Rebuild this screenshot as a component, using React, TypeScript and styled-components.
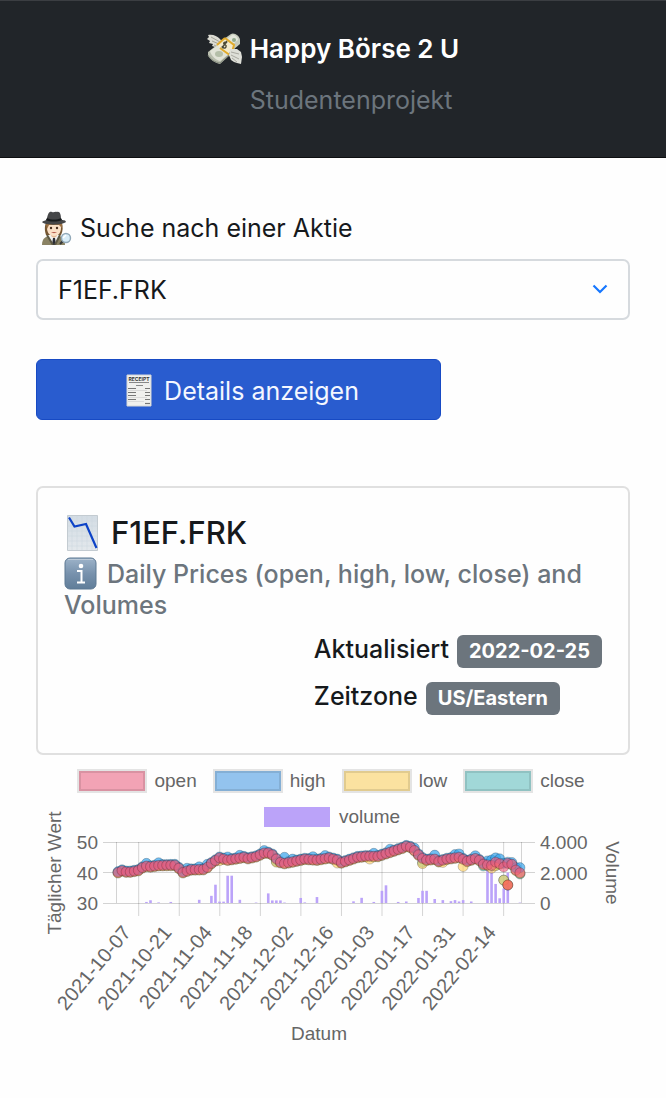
import React from "react";
import styled, { createGlobalStyle } from "styled-components";

const GlobalStyle = createGlobalStyle`
  * { box-sizing: border-box; }
  body {
    margin: 0;
    background: #fefefe;
    color: #16191c;
    font-family: Inter, "Liberation Sans", sans-serif;
    font-size: 25px;
    line-height: 30px;
  }
  h1, h2, h3, p, ul, dl, dd { margin: 0; padding: 0; }
`;

const Header = styled.header`
  display: flex;
  justify-content: center;
  padding: 31px 24px 40px;
  background: #212529;
  border-top: 1px solid #3b3e42;
  border-bottom: 1px solid #0d0f11;
`;

const Brand = styled.div`
  display: grid;
  grid-template-columns: auto auto;
  column-gap: 8px;
  row-gap: 19px;
  align-items: center;
`;

const BrandTitle = styled.h1`
  color: #fff;
  font-size: 26px;
  line-height: 33px;
  font-weight: 600;
`;

const BrandLink = styled.a`
  grid-column: 2;
  color: #6c757d;
  text-decoration: none;
  line-height: 33px;
`;

const Main = styled.main`
  padding: 53px 36px 48px;
`;

const Field = styled.div`
  display: flex;
  flex-direction: column;
  gap: 14px;
`;

const FieldLabel = styled.label`
  display: flex;
  align-items: center;
  gap: 8px;
  padding-left: 4px;
  line-height: 34px;
`;

const SelectBox = styled.div`
  position: relative;
`;

const Select = styled.select`
  display: block;
  width: 100%;
  height: 61px;
  padding: 1px 60px 0 20px;
  appearance: none;
  border: 2px solid #d6dade;
  border-radius: 7px;
  background: #fefefe;
  color: inherit;
  font: inherit;
`;

const Chevron = styled.svg`
  position: absolute;
  top: 25px;
  right: 22px;
  pointer-events: none;
`;

const Button = styled.button`
  display: flex;
  align-items: center;
  justify-content: center;
  gap: 12px;
  width: 68.2%;
  height: 61px;
  margin: 39px 0 66px;
  padding: 2px 0 0 8px;
  border: 1px solid #174ac4;
  border-radius: 6px;
  background: #295ccf;
  color: #f4f7ff;
  font: inherit;
`;

const Card = styled.section`
  padding: 26px 26px 38px 26px;
  border: 2px solid #e0e0e0;
  border-radius: 7px;
`;

const CardTitle = styled.h2`
  display: flex;
  align-items: center;
  gap: 13px;
  padding-left: 3px;
  font-size: 31px;
  line-height: 38px;
  font-weight: 500;
`;

const CardSubtitle = styled.h3`
  margin-top: 7px;
  color: #6c757d;
  font-size: 25px;
  line-height: 31px;
  font-weight: 500;

  svg { margin: -2px 10px -7px 0; }
`;

const Facts = styled.dl`
  display: flex;
  flex-direction: column;
  gap: 14px;
  width: fit-content;
  margin: 14px 0 0 auto;
`;

const Fact = styled.div`
  display: flex;
  align-items: center;
  gap: 8px;

  dt { font-weight: 500; margin-top: -5px; }
`;

const Badge = styled.dd`
  padding: 0 12px;
  border-radius: 6px;
  background: #6c757d;
  color: #fff;
  font-size: 20px;
  line-height: 33px;
  font-weight: 700;
`;

const Figure = styled.figure`
  margin: 8px 0 0;
  color: #666;
  font: 19px/20px "Liberation Sans", Arial, sans-serif;
`;

const Legend = styled.ul`
  display: flex;
  flex-wrap: wrap;
  justify-content: center;
  gap: 16px 18px;
  padding: 8px 38px 0 36px;
  list-style: none;
`;

const LegendItem = styled.li`
  display: flex;
  align-items: center;
  gap: 9px;
`;

const Swatch = styled.span<{ $color: string; $outlined?: boolean }>`
  width: 66px;
  height: 20px;
  background: ${(p) => p.$color};
  box-shadow: ${(p) =>
    p.$outlined ? "0 0 0 2px rgba(0,0,0,.1), inset 0 0 0 2px rgba(0,0,0,.1)" : "none"};
`;

const Plot = styled.svg`
  display: block;
  width: 100%;
  height: auto;
  margin-top: 3px;
  overflow: visible;
  fill: #666;
`;

const MoneyIcon = () => (
  <svg width="35" height="32" viewBox="0 0 35 32" aria-hidden="true">
    <path d="M1 2c5-1 9 1 12 4l3 4-5 7-3-3-3-1 1-2-4-1 1-2-3-2 2-2z" fill="#dcdcd3" />
    <path d="M4 4l9 5M5 8l7 3M7 12l4 2" stroke="#a3a398" fill="none" />
    <path d="M17 6l7-5c3-2 9 2 9 6v4l-7 6z" fill="#c5cabb" />
    <path d="M20 6l5-4c2-1 6 2 6 5l-6 5z" fill="#e3e6da" />
    <path d="M1 19l9-7 13 10-10 9c-5-1-11-5-12-9z" fill="#b8bdad" />
    <path d="M3 18l8-6 11 9-9 7c-4-1-9-5-10-10z" fill="#e1e3d7" />
    <ellipse cx="12" cy="21" rx="4" ry="3" fill="#b4bea8" />
    <ellipse cx="27" cy="7" rx="2" ry="2" fill="#92aa8c" />
    <path d="M10 12l8-7 9 8-6 9z" fill="#f3ebcd" />
    <path d="M10 12l8-7M13 15l11 8M18 5l9 7-3 11" stroke="#e0aa2b" strokeWidth="2" fill="none" />
    <path d="M20 10c-2-2-4 0-3 1s3 1 2 3-3 1-4-1M20 8l-5 7" stroke="#4c4a36" strokeWidth="1.4" fill="none" />
    <path d="M23 16l7 0 4 3 1 5-1 7-4-1-3-1-3-2-2-5z" fill="#dedfd8" />
    <path d="M24 19l8 2M24 22l8 4M25 25l5 4" stroke="#a9a9a1" fill="none" />
    <path d="M1 22c3 5 7 7 12 8l9-8" stroke="#858b7d" fill="none" />
  </svg>
);

const DetectiveIcon = () => (
  <svg width="32" height="34" viewBox="0 0 32 34" aria-hidden="true">
    <path d="M6 12c-2 4-1 9 0 12h15c2-4 2-8 1-12z" fill="#755632" />
    <path d="M2 34c0-7 4-9 9-9h6c6 0 8 4 8 9z" fill="#8a8263" />
    <path d="M8 25l6 9 6-9-3-2h-6z" fill="#f0f1ef" />
    <path d="M13 27h2l1 7h-4z" fill="#292b35" />
    <path d="M7 24l6 10M20 24l-5 10" stroke="#5d5945" strokeWidth="2" />
    <path d="M11 21h6v4l-3 2-3-2z" fill="#e4b793" />
    <path d="M7 11h14v6c0 5-3 8-7 8s-7-3-7-8z" fill="#fae0c7" />
    <path d="M6 13c3-2 12-2 16 0v4l-3-3H9l-2 4z" fill="#9b7043" />
    <circle cx="11" cy="17" r="1.2" fill="#493020" />
    <circle cx="17" cy="17" r="1.2" fill="#493020" />
    <path d="M11 21c2 1.500 4 1.500 6 0z" fill="#b75e51" />
    <path d="M2 11c2-2 5-1 5-4 1-4 2-7 5-6 2 1 3-1 5 0 3-1 4 3 4 7 1 2 4 0 5 3-3 3-20 4-24 0z" fill="#454648" />
    <path d="M7 7c4 2 10 2 14 0l1 2c-5 2-12 2-16 0z" fill="#191c1e" />
    <path d="M23 30l-3 3" stroke="#343638" strokeWidth="2" />
    <circle cx="26" cy="27" r="4.5" fill="#d8edf8" stroke="#91a8b8" strokeWidth="1.4" />
    <path d="M23 27l3-3" stroke="#fff" strokeWidth="1.5" />
  </svg>
);

const receiptRows = [14, 18, 21, 25, 29];

const ReceiptIcon = () => (
  <svg width="26" height="33" viewBox="0 0 26 33" aria-hidden="true">
    <path d="M1 1h24v31H1z" fill="#f0f0ee" stroke="#d5d6d6" />
    <text x="13" y="7" textAnchor="middle" fontSize="5" fontWeight="700" fontFamily="Inter, sans-serif" fill="#333">
      RECEIPT
    </text>
    <path d="M3 8.500h20M10 11.500h7" stroke="#888" />
    {receiptRows.map((y, i) => (
      <path key={y} d={i < 4 ? `M2 ${y}.5h8M19 ${y}.5h5` : `M19 ${y}.5h5`} stroke="#777" strokeWidth="1.2" />
    ))}
    <path d="M2 16.5h19M2 23.5h19M2 27.5h16" stroke="#dadada" />
  </svg>
);

const TrendIcon = () => (
  <svg width="31" height="36" viewBox="0 0 31 36" aria-hidden="true">
    <defs>
      <linearGradient id="paper" x2="0" y2="1">
        <stop stopColor="#d3dce4" />
        <stop offset="1" stopColor="#e3e8ec" />
      </linearGradient>
    </defs>
    <path d="M.5.5h30v35H.5z" fill="url(#paper)" stroke="#c3cbd1" />
    <path d="M5 1v34M10 1v34M15 1v34M20 1v34M25 1v34M1 6h29M1 11h29M1 16h29M1 21h29M1 26h29M1 31h29" stroke="#cbd5de" strokeWidth=".5" />
    <path d="M2 2.500l5.500 9L19 9l10.500 24" fill="none" stroke="#0d43c7" strokeWidth="2.2" />
  </svg>
);

const InfoIcon = () => (
  <svg width="33" height="33" viewBox="0 0 33 33" aria-hidden="true">
    <defs>
      <linearGradient id="tile" x2="0" y2="1">
        <stop stopColor="#9db3c9" />
        <stop offset=".5" stopColor="#7892ad" />
        <stop offset="1" stopColor="#607d99" />
      </linearGradient>
    </defs>
    <rect x="1" y="1" width="31" height="31" rx="5" fill="url(#tile)" stroke="#5d7892" />
    <path d="M4 2.5h25" stroke="#bccbd9" />
    <circle cx="17" cy="9" r="2.3" fill="#fff" />
    <path d="M13 14h4.500v11M13 25.500h8" fill="none" stroke="#fff" strokeWidth="2" />
  </svg>
);

const series = [
  { name: "open", color: "#f2a3b5", outlined: true },
  { name: "high", color: "#93c3ee", outlined: true },
  { name: "low", color: "#fbe2a0", outlined: true },
  { name: "close", color: "#a1d8d8", outlined: true },
  { name: "volume", color: "#bba3f9", outlined: false },
];

/* Opening prices on the trading days where the course bends: [day, price]. */
const openKnots: [number, number][] = [
  [0, 40.0], [1, 40.6], [2, 40.2], [3, 40.2], [5, 40.7], [6, 41.6], [7, 42.1], [8, 41.9], [10, 42.3],
  [14, 42.4], [15, 41.4], [16, 40.0], [17, 40.5], [18, 40.9], [21, 41.0], [22, 41.7], [23, 43.0],
  [24, 43.9], [25, 44.8], [27, 44.1], [29, 44.5], [31, 45.0], [32, 44.6], [34, 45.2], [35, 45.8], [36, 46.4],
  [37, 46.4], [38, 45.8], [39, 44.4], [40, 43.3], [41, 43.0], [43, 43.5], [46, 44.4], [49, 44.1],
  [52, 44.8], [54, 44.1], [55, 43.2], [57, 44.1], [59, 45.0], [61, 45.3], [64, 45.3], [66, 46.2],
  [68, 47.1], [70, 48.0], [71, 48.6], [72, 48.3], [73, 47.2], [74, 45.8], [75, 44.6], [76, 44.1],
  [78, 44.4], [79, 43.6], [81, 44.4], [84, 45.0], [86, 43.7], [88, 44.6], [89, 44.0], [90, 42.7],
  [92, 42.3], [93, 43.4], [94, 42.9], [95, 41.8], [96, 43.0], [97, 42.7], [98, 40.8], [99, 39.9],
  [100, 40.4],
];

const openPrices = openKnots.flatMap(([day, price], i) => {
  const next = openKnots[i + 1];
  if (!next) return [];
  return Array.from({ length: next[0] - day }, (_, k) => price + ((next[1] - price) * k) / (next[0] - day));
});

const highJumps: Record<number, number> = {
  7: 0.9, 10: 0.9, 17: 0.9, 20: 0.9, 22: 1, 27: 1, 30: 0.9, 36: 0.8, 41: 2, 43: 0.9, 48: 1, 51: 1,
  63: 1, 67: 1, 73: 0.8, 78: 1.3, 83: 1.1, 84: 1.1, 88: 0.9, 91: 1.3, 92: 1.8, 93: 1.4, 94: 1.6, 95: 1.2, 96: 0.4, 97: 0.6, 98: 0.8, 99: 1.7,
};
const lowDrops: Record<number, number> = { 25: 0.9, 39: 1, 54: 1, 62: 0.9, 75: 1.7, 80: 0.7, 85: 2.4, 92: 0.9, 93: 1.2, 95: 4.3, 96: 7.1 };
const closeDrops: Record<number, number> = { 39: 0.8, 75: 1.3, 90: 0.6, 93: 1, 95: 4.3, 96: 7.1, 99: 0.4 };

const volumes: Record<number, number> = {
  7: 70, 8: 180, 10: 40, 13: 70, 20: 210, 23: 470, 24: 1200, 25: 90, 26: 90, 27: 1790, 28: 1790, 30: 210,
  34: 30, 37: 630, 38: 170, 39: 170, 40: 170, 41: 30, 45: 330, 46: 40, 49: 390, 58: 110, 60: 340, 63: 70,
  65: 800, 66: 1160, 69: 70, 71: 100, 74: 330, 75: 800, 76: 800, 78: 260, 80: 190, 82: 120, 83: 190,
  84: 100, 85: 190, 87: 100, 91: 2240, 92: 2200, 93: 1250, 94: 310, 95: 950, 96: 2000, 99: 30,
};

const days = [
  "2021-10-07", "2021-10-21", "2021-11-04", "2021-11-18", "2021-12-02",
  "2021-12-16", "2022-01-03", "2022-01-17", "2022-01-31", "2022-02-14",
];

const left = 80;
const right = 486;
const top = 12;
const bottom = 73;
const dayX = (day: number) => left + ((right - left) * (day + 0.5)) / 100;
const priceY = (price: number) => bottom - ((price - 30) * (bottom - top)) / 20;

const Dots = ({ prices, color }: { prices: number[]; color: string }) => (
  <g fill={color} stroke="#000" strokeOpacity=".2">
    {prices.map((price, day) => (
      <circle key={day} cx={dayX(day)} cy={priceY(price)} r="5" />
    ))}
  </g>
);

const PriceChart = () => (
  <Plot viewBox="0 0 594 222" role="img" aria-label="Täglicher Wert und Volume">
    <g stroke="#000" strokeOpacity=".17">
      {[top, 42, bottom].map((y) => (
        <path key={y} d={`M67 ${y + 0.5}H499`} />
      ))}
      {days.map((day, i) => (
        <path key={day} d={`M${102.7 + i * 40.55} ${top}V86`} />
      ))}
      <path d={`M${left}.5 ${top}V${bottom}M${right - 0.5} ${top}V${bottom}`} />
    </g>
    <g fill="#bba3f9">
      {Object.entries(volumes).map(([day, volume]) => {
        const height = (volume / 4000) * (bottom - top);
        return <rect key={day} x={dayX(Number(day)) - 1.3} y={bottom - height} width="2.600" height={height} />;
      })}
    </g>
    <Dots color="rgba(75,192,192,.6)" prices={openPrices.map((p, i) => p - (closeDrops[i] ?? 0))} />
    <Dots color="rgba(255,205,86,.6)" prices={openPrices.map((p, i) => p - (lowDrops[i] ?? 0.2))} />
    <Dots color="rgba(54,162,235,.7)" prices={openPrices.map((p, i) => p + (highJumps[i] ?? 0.3))} />
    <Dots color="rgba(238,92,125,.65)" prices={openPrices} />
    <circle cx={dayX(96)} cy={priceY(35.9)} r="5" fill="rgba(250,90,90,.75)" stroke="#000" strokeOpacity=".2" />
    <g textAnchor="end">
      <text x="62" y="19">50</text>
      <text x="62" y="50">40</text>
      <text x="62" y="80">30</text>
    </g>
    <text x="504" y="19">4.000</text>
    <text x="504" y="50">2.000</text>
    <text x="504" y="80">0</text>
    <g textAnchor="end" fontSize="20">
      {days.map((day, i) => (
        <text key={day} transform={`translate(${96 + i * 40.55} 103) rotate(-50)`}>
          {day}
        </text>
      ))}
    </g>
    <g textAnchor="middle">
      <text transform="translate(25 43) rotate(-90)">Täglicher Wert</text>
      <text transform="translate(570 43) rotate(90)">Volume</text>
      <text x="283" y="210">Datum</text>
    </g>
  </Plot>
);

export default function App() {
  return (
    <>
      <GlobalStyle />
      <Header>
        <Brand>
          <MoneyIcon />
          <BrandTitle>Happy Börse 2 U</BrandTitle>
          <BrandLink href="#projekt">Studentenprojekt</BrandLink>
        </Brand>
      </Header>
      <Main>
        <Field>
          <FieldLabel htmlFor="aktie">
            <DetectiveIcon />
            Suche nach einer Aktie
          </FieldLabel>
          <SelectBox>
            <Select id="aktie" defaultValue="F1EF.FRK">
              <option>F1EF.FRK</option>
            </Select>
            <Chevron width="16" height="11" viewBox="0 0 16 11" aria-hidden="true">
              <path d="M1.500 1.500L8 8l6.500-6.500" fill="none" stroke="#1677ff" strokeWidth="2.200" />
            </Chevron>
          </SelectBox>
        </Field>
        <Button type="button">
          <ReceiptIcon />
          Details anzeigen
        </Button>
        <Card>
          <CardTitle>
            <TrendIcon />
            F1EF.FRK
          </CardTitle>
          <CardSubtitle>
            <InfoIcon />
            Daily Prices (open, high, low, close) and Volumes
          </CardSubtitle>
          <Facts>
            <Fact>
              <dt>Aktualisiert</dt>
              <Badge>2022-02-25</Badge>
            </Fact>
            <Fact>
              <dt>Zeitzone</dt>
              <Badge>US/Eastern</Badge>
            </Fact>
          </Facts>
        </Card>
        <Figure>
          <Legend>
            {series.map((s) => (
              <LegendItem key={s.name}>
                <Swatch $color={s.color} $outlined={s.outlined} />
                {s.name}
              </LegendItem>
            ))}
          </Legend>
          <PriceChart />
        </Figure>
      </Main>
    </>
  );
}
